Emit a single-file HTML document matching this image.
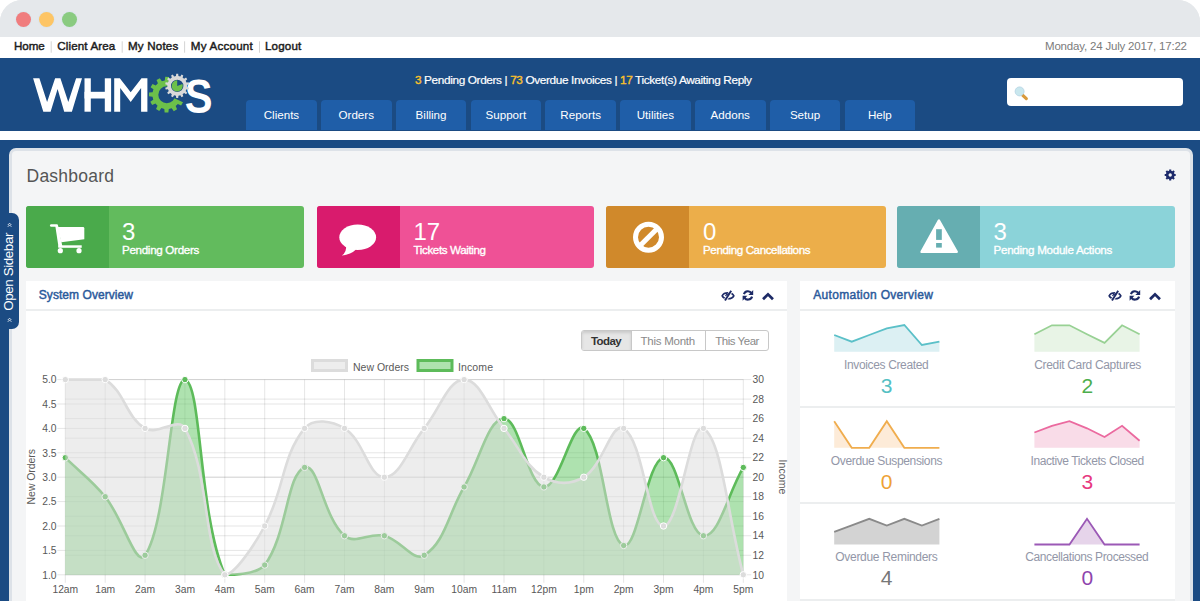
<!DOCTYPE html>
<html><head><meta charset="utf-8">
<style>
*{margin:0;padding:0;box-sizing:border-box}
html,body{width:1200px;height:601px;overflow:hidden;background:#fff;font-family:"Liberation Sans",sans-serif}
.abs{position:absolute;white-space:nowrap}
#win{position:absolute;left:0;top:0;width:1200px;height:601px;border-radius:22px 22px 0 0;overflow:hidden;background:#e5e8eb}
#bluebg{left:0;top:58px;width:1200px;height:543px;background:#1b4b83}
#chrome{left:0;top:0;width:1200px;height:37px;background:#e5e8eb}
.dot{width:15px;height:15px;border-radius:50%;top:12px}
#topnav{left:0;top:37px;width:1200px;height:21px;background:#fff}
#links{left:13.5px;top:40px;font-size:12px;font-weight:bold;color:#1a1a1a;letter-spacing:-0.2px}
#links .sep{color:#ccc;font-weight:normal;padding:0 2px}
#date{left:1045px;top:40px;font-size:12px;color:#7a7a7a;letter-spacing:-0.42px}
#header{left:0;top:58px;width:1200px;height:72.5px;background:#1b4b83}
#strip{left:0;top:130.5px;width:1200px;height:9.5px;background:#fff}
.tab{top:100.3px;height:30.2px;width:70.5px;background:#1f5ea8;border-radius:4px 4px 0 0;color:#fff;font-size:11.5px;text-align:center;line-height:30px;letter-spacing:-0.3px}
#alerts{left:415px;top:74px;font-size:11.5px;color:#fff;letter-spacing:-0.25px}
#alerts b{color:#f5b83d;font-weight:bold}
#search{left:1007.4px;top:77.9px;width:175.8px;height:27.9px;background:#fff;border-radius:4px}
#panel{left:9px;top:148px;width:1183.5px;height:470px;background:#f4f5f6;border:3px solid #dde2e8;border-radius:7px}
#dash{left:26px;top:164.5px;font-size:17.5px;color:#4a4a4a;letter-spacing:0.2px}
.box{top:206px;height:62px;width:277.5px;border-radius:3px;overflow:hidden}
.box .ic{left:0;top:0;width:83px;height:62px}
.box .num{left:96px;top:15px;font-size:24px;color:#fff}
.box .lbl{left:96px;top:38px;font-size:11px;color:#fff;font-weight:bold;letter-spacing:-0.45px}
.widget{background:#fff;top:281px;height:330px}
.whead{left:0;top:0;width:100%;height:29.5px;border-bottom:2px solid #eceeef}
.wtitle{top:7px;font-size:12px;font-weight:bold;color:#2b5b9c}
.slbl{font-size:12px;color:#8c8c9a;text-align:center;width:200px;letter-spacing:-0.35px}
.snum{font-size:20px;text-align:center;width:200px}
.sep2{left:800px;width:374.5px;height:2px;background:#eceeef}
#btns{left:581px;top:329.5px;width:187.6px;height:21.5px;border:1px solid #c8c8c8;border-radius:3px;overflow:hidden;background:#fff}
.btn{top:0;height:19.5px;line-height:19px;font-size:11.5px;color:#888;text-align:center}
</style></head><body>
<div id="win">
<div id="chrome" class="abs"></div><div id="bluebg" class="abs"></div>
<div class="abs dot" style="left:15.5px;top:12px;background:#f07d7e;box-shadow:0 0 0 1px #dde6ec"></div>
<div class="abs dot" style="left:38.5px;top:12px;background:#fdc565;box-shadow:0 0 0 1px #dde6ec"></div>
<div class="abs dot" style="left:61.5px;top:12px;background:#8acb80;box-shadow:0 0 0 1px #dde6ec"></div>
<div id="topnav" class="abs"></div>
<div id="header" class="abs"></div>
<svg class="abs" style="left:0;top:0" width="240" height="130">
 <g fill="#fff">
  <polygon points="33.1,78.3 39.4,78.3 47.1,101.9 55.1,78.3 60.4,78.3 68.3,101.9 76.1,78.3 82,78.3 71.9,111.7 64.2,111.7 57.6,89 50.6,111.7 43.3,111.7"/>
  <rect x="84.5" y="78.3" width="6.3" height="33.4"/><rect x="104.8" y="78.3" width="6.3" height="33.4"/><rect x="84.5" y="91.8" width="26" height="6.7"/>
  <polygon points="114.2,78.3 119.8,78.3 130.7,92.2 141.5,78.3 147.4,78.3 147.4,111.7 141.1,111.7 141.1,88 130.7,102 120.2,88 120.2,111.7 114.2,111.7"/>
 </g>
 <text transform="translate(184.8,112.6) scale(0.86,1)" font-size="48.5" font-weight="bold" fill="#fff" font-family="Liberation Sans">S</text>
 <defs><clipPath id="cgap"><path d="M166.80 94.70 L203.05 111.60 L199.35 117.95 L194.54 123.51 L188.80 128.10 L182.32 131.57 L175.32 133.78 L168.02 134.68 L160.69 134.23 L153.56 132.44 L146.88 129.38 L140.87 125.15 L135.73 119.90 L131.65 113.79 L128.75 107.03 L127.13 99.86 L126.86 92.52 L127.93 85.25 L130.32 78.30 L133.93 71.90 L138.66 66.27 L144.34 61.60 L150.77 58.05 L157.75 55.74 L165.03 54.74 L172.37 55.09 Z"/></clipPath></defs>
<path clip-path="url(#cgap)" fill-rule="evenodd" fill="#6cc04a" d="M164.80 80.44 L165.24 76.87 L168.98 76.93 L169.30 80.52 L172.19 81.35 L174.36 78.48 L177.57 80.40 L176.06 83.67 L178.15 85.83 L181.46 84.43 L183.28 87.71 L180.33 89.77 L181.06 92.70 L184.63 93.14 L184.57 96.88 L180.98 97.20 L180.15 100.09 L183.02 102.26 L181.10 105.47 L177.83 103.96 L175.67 106.05 L177.07 109.36 L173.79 111.18 L171.73 108.23 L168.80 108.96 L168.36 112.53 L164.62 112.47 L164.30 108.88 L161.41 108.05 L159.24 110.92 L156.03 109.00 L157.54 105.73 L155.45 103.57 L152.14 104.97 L150.32 101.69 L153.27 99.63 L152.54 96.70 L148.97 96.26 L149.03 92.52 L152.62 92.20 L153.45 89.31 L150.58 87.14 L152.50 83.93 L155.77 85.44 L157.93 83.35 L156.53 80.04 L159.81 78.22 L161.87 81.17 Z M158.30 94.70 A8.50 8.50 0 1 0 175.30 94.70 A8.50 8.50 0 1 0 158.30 94.70 Z"/>
<path fill-rule="evenodd" fill="#d9d9d9" d="M175.96 76.08 L176.22 73.84 L178.18 73.84 L178.44 76.08 L180.34 76.51 L181.55 74.61 L183.31 75.46 L182.58 77.59 L184.11 78.81 L186.02 77.62 L187.24 79.14 L185.65 80.75 L186.50 82.50 L188.74 82.26 L189.18 84.17 L187.05 84.92 L187.05 86.88 L189.18 87.63 L188.74 89.54 L186.50 89.30 L185.65 91.05 L187.24 92.66 L186.02 94.18 L184.11 92.99 L182.58 94.21 L183.31 96.34 L181.55 97.19 L180.34 95.29 L178.44 95.72 L178.18 97.96 L176.22 97.96 L175.96 95.72 L174.06 95.29 L172.85 97.19 L171.09 96.34 L171.82 94.21 L170.29 92.99 L168.38 94.18 L167.16 92.66 L168.75 91.05 L167.90 89.30 L165.66 89.54 L165.22 87.63 L167.35 86.88 L167.35 84.92 L165.22 84.17 L165.66 82.26 L167.90 82.50 L168.75 80.75 L167.16 79.14 L168.38 77.62 L170.29 78.81 L171.82 77.59 L171.09 75.46 L172.85 74.61 L174.06 76.51 Z M171.00 85.90 A6.20 6.20 0 1 0 183.40 85.90 A6.20 6.20 0 1 0 171.00 85.90 Z"/>
<path fill="#6cc04a" d="M177.20 85.90 L182.46 83.98 A5.6 5.6 0 1 1 177.20 80.30 Z"/>
</svg>
<div id="search" class="abs"></div>
<svg class="abs" style="left:1005px;top:76px" width="30" height="30"><line x1="17.8" y1="19.3" x2="21.3" y2="22.6" stroke="#d99a3c" stroke-width="3.2" stroke-linecap="round"/><circle cx="14.6" cy="15.4" r="4.5" fill="#c9e7ee" stroke="#b4d3e3" stroke-width="0.8"/></svg>
<div class="abs tab" style="left:246.2px"></div>
<div class="abs tab" style="left:321px"></div>
<div class="abs tab" style="left:395.8px"></div>
<div class="abs tab" style="left:470.6px"></div>
<div class="abs tab" style="left:545.4px"></div>
<div class="abs tab" style="left:620.2px"></div>
<div class="abs tab" style="left:695px"></div>
<div class="abs tab" style="left:769.8px"></div>
<div class="abs tab" style="left:844.6px"></div>
<div id="strip" class="abs"></div>
<div id="panel" class="abs"></div>
<svg class="abs" style="left:1162px;top:166.5px" width="16" height="16"><path fill-rule="evenodd" fill="#1d2a6b" d="M7.17 3.72 L7.15 2.50 L9.25 2.50 L9.23 3.72 L10.50 4.25 L11.35 3.37 L12.83 4.85 L11.95 5.70 L12.48 6.97 L13.70 6.95 L13.70 9.05 L12.48 9.03 L11.95 10.30 L12.83 11.15 L11.35 12.63 L10.50 11.75 L9.23 12.28 L9.25 13.50 L7.15 13.50 L7.17 12.28 L5.90 11.75 L5.05 12.63 L3.57 11.15 L4.45 10.30 L3.92 9.03 L2.70 9.05 L2.70 6.95 L3.92 6.97 L4.45 5.70 L3.57 4.85 L5.05 3.37 L5.90 4.25 Z M6.50 8.00 A1.70 1.70 0 1 0 9.90 8.00 A1.70 1.70 0 1 0 6.50 8.00 Z"/></svg>

<div class="abs box" style="left:26px;background:#62bb5d"><div class="abs ic" style="background:#4aaa4b"></div></div>
<div class="abs box" style="left:316.8px;background:#ef5196"><div class="abs ic" style="background:#d91b6d"></div></div>
<div class="abs box" style="left:606.4px;width:279.2px;background:#ecae4a"><div class="abs ic" style="background:#d0892b"></div></div>
<div class="abs box" style="left:897.2px;width:278px;background:#8bd3d9"><div class="abs ic" style="background:#66aeb1"></div></div>
<svg class="abs" style="left:0;top:200px" width="1200" height="70">
 <g fill="#fff">
  <rect x="50" y="24.3" width="8" height="2.5" rx="1.2"/>
  <polygon points="55.3,26 58.2,26 62.3,46 58.5,47"/>
  <path d="M57.5 27 L83 27 Q84.3 27 84.3 28.3 L84.3 39.3 L61.3 42.2 Z"/>
  <rect x="58.3" y="45.3" width="23.4" height="2.5"/>
  <circle cx="60.3" cy="50.7" r="2.6"/><circle cx="79" cy="50.7" r="2.6"/>
  <ellipse cx="357.7" cy="37.3" rx="18.4" ry="12.8"/>
  <path d="M346 45 Q347 52 341.8 55.5 Q351 54.5 356 49.5 Z"/>
 </g>
 <g fill="none" stroke="#fff" stroke-width="5"><circle cx="648.5" cy="37.2" r="13"/><line x1="657.8" y1="27.9" x2="639.2" y2="46.5"/></g>
 <path fill="#fff" stroke="#fff" stroke-width="2.5" stroke-linejoin="round" d="M938.9 20.5 L921.6 51.8 L956.7 51.8 Z"/><rect x="936.1" y="29.2" width="5.7" height="10.7" fill="#66aeb1"/><rect x="936.1" y="43" width="5.7" height="4.6" fill="#66aeb1"/>
</svg>

<div class="abs widget" style="left:26px;width:761px"><div class="abs whead"></div></div>
<div class="abs widget" style="left:800px;width:374.5px"><div class="abs whead"></div></div>
<svg class="abs" style="left:715.0px;top:285px" width="60" height="22"><g transform="translate(-715,-285)"><path d="M722.2 295.8 C724 292 732 292 733.8 295.8 C732 299.6 724 299.6 722.2 295.8 Z" fill="none" stroke="#1d2a66" stroke-width="1.7"/><line x1="731.2" y1="290.8" x2="725" y2="300.6" stroke="#fff" stroke-width="3.4"/><line x1="731.2" y1="290.8" x2="725" y2="300.6" stroke="#1d2a66" stroke-width="1.9"/><path d="M725.5 296 Q727 293.5 729 294" fill="none" stroke="#1d2a66" stroke-width="1.2"/><path d="M743.9 294.2 A4.3 4.3 0 0 1 751.6 293.3" fill="none" stroke="#1d2a66" stroke-width="2.1"/><path d="M752.1 296.7 A4.3 4.3 0 0 1 744.4 297.6" fill="none" stroke="#1d2a66" stroke-width="2.1"/><path d="M753.2 290.1 L753.2 295 L748.4 295 Z" fill="#1d2a66"/><path d="M742.6 300.7 L742.6 295.8 L747.4 295.8 Z" fill="#1d2a66"/><polyline points="764,298.3 768,294.3 772,298.3" fill="none" stroke="#1d2a66" stroke-width="2.7" stroke-linecap="square"/></g></svg><svg class="abs" style="left:1102.2px;top:285px" width="60" height="22"><g transform="translate(-715,-285)"><path d="M722.2 295.8 C724 292 732 292 733.8 295.8 C732 299.6 724 299.6 722.2 295.8 Z" fill="none" stroke="#1d2a66" stroke-width="1.7"/><line x1="731.2" y1="290.8" x2="725" y2="300.6" stroke="#fff" stroke-width="3.4"/><line x1="731.2" y1="290.8" x2="725" y2="300.6" stroke="#1d2a66" stroke-width="1.9"/><path d="M725.5 296 Q727 293.5 729 294" fill="none" stroke="#1d2a66" stroke-width="1.2"/><path d="M743.9 294.2 A4.3 4.3 0 0 1 751.6 293.3" fill="none" stroke="#1d2a66" stroke-width="2.1"/><path d="M752.1 296.7 A4.3 4.3 0 0 1 744.4 297.6" fill="none" stroke="#1d2a66" stroke-width="2.1"/><path d="M753.2 290.1 L753.2 295 L748.4 295 Z" fill="#1d2a66"/><path d="M742.6 300.7 L742.6 295.8 L747.4 295.8 Z" fill="#1d2a66"/><polyline points="764,298.3 768,294.3 772,298.3" fill="none" stroke="#1d2a66" stroke-width="2.7" stroke-linecap="square"/></g></svg>

<div id="btns" class="abs">
 <div class="abs btn" style="left:0;width:50px;background:#e6e6e6;color:#333;font-weight:bold;box-shadow:inset 0 2px 3px rgba(0,0,0,.12);border-right:1px solid #c8c8c8"></div>
 <div class="abs btn" style="left:50px;width:74px;border-right:1px solid #c8c8c8"></div>
 <div class="abs btn" style="left:124px;width:63px"></div>
</div>

<svg class="abs" style="left:0;top:0" width="1200" height="601">
<rect x="312.5" y="360.5" width="34" height="10" fill="rgba(220,220,220,0.5)" stroke="rgba(220,220,220,1)" stroke-width="3"/>
<rect x="418" y="360.5" width="34" height="10" fill="rgba(93,197,96,0.5)" stroke="rgba(93,187,90,1)" stroke-width="3"/>

<g stroke="rgba(0,0,0,0.1)" stroke-width="1"><line x1="57.3" y1="379.60" x2="743.3" y2="379.60"/><line x1="57.3" y1="404.00" x2="743.3" y2="404.00"/><line x1="57.3" y1="428.40" x2="743.3" y2="428.40"/><line x1="57.3" y1="452.80" x2="743.3" y2="452.80"/><line x1="57.3" y1="477.20" x2="743.3" y2="477.20"/><line x1="57.3" y1="501.60" x2="743.3" y2="501.60"/><line x1="57.3" y1="526.00" x2="743.3" y2="526.00"/><line x1="57.3" y1="550.40" x2="743.3" y2="550.40"/><line x1="57.3" y1="574.80" x2="743.3" y2="574.80"/><line x1="65.3" y1="379.60" x2="751.3" y2="379.60"/><line x1="65.3" y1="399.12" x2="751.3" y2="399.12"/><line x1="65.3" y1="418.64" x2="751.3" y2="418.64"/><line x1="65.3" y1="438.16" x2="751.3" y2="438.16"/><line x1="65.3" y1="457.68" x2="751.3" y2="457.68"/><line x1="65.3" y1="477.20" x2="751.3" y2="477.20"/><line x1="65.3" y1="496.72" x2="751.3" y2="496.72"/><line x1="65.3" y1="516.24" x2="751.3" y2="516.24"/><line x1="65.3" y1="535.76" x2="751.3" y2="535.76"/><line x1="65.3" y1="555.28" x2="751.3" y2="555.28"/><line x1="65.3" y1="574.80" x2="751.3" y2="574.80"/><line x1="65.30" y1="379.6" x2="65.30" y2="582.8"/><line x1="105.18" y1="379.6" x2="105.18" y2="582.8"/><line x1="145.06" y1="379.6" x2="145.06" y2="582.8"/><line x1="184.95" y1="379.6" x2="184.95" y2="582.8"/><line x1="224.83" y1="379.6" x2="224.83" y2="582.8"/><line x1="264.71" y1="379.6" x2="264.71" y2="582.8"/><line x1="304.59" y1="379.6" x2="304.59" y2="582.8"/><line x1="344.48" y1="379.6" x2="344.48" y2="582.8"/><line x1="384.36" y1="379.6" x2="384.36" y2="582.8"/><line x1="424.24" y1="379.6" x2="424.24" y2="582.8"/><line x1="464.12" y1="379.6" x2="464.12" y2="582.8"/><line x1="504.01" y1="379.6" x2="504.01" y2="582.8"/><line x1="543.89" y1="379.6" x2="543.89" y2="582.8"/><line x1="583.77" y1="379.6" x2="583.77" y2="582.8"/><line x1="623.65" y1="379.6" x2="623.65" y2="582.8"/><line x1="663.54" y1="379.6" x2="663.54" y2="582.8"/><line x1="703.42" y1="379.6" x2="703.42" y2="582.8"/><line x1="743.30" y1="379.6" x2="743.30" y2="582.8"/></g>
<path d="M65.30 457.68 C81.25 473.30 91.12 479.52 105.18 496.72 C123.03 518.56 136.06 568.50 145.06 555.28 C167.96 521.66 169.80 379.60 184.95 379.60 C201.70 383.70 198.38 513.30 224.83 574.80 C230.28 574.80 255.77 574.80 264.71 565.04 C287.68 534.13 286.37 474.13 304.59 467.44 C318.27 462.42 323.26 517.59 344.48 535.76 C355.17 544.92 369.26 532.07 384.36 535.76 C401.17 539.87 412.77 562.30 424.24 555.28 C444.68 542.78 448.17 514.29 464.12 486.96 C480.08 459.63 488.05 418.64 504.01 418.64 C519.96 418.64 527.06 484.90 543.89 486.96 C558.96 488.80 572.15 419.87 583.77 428.40 C604.06 443.29 605.73 538.94 623.65 545.52 C637.63 550.65 646.82 459.73 663.54 457.68 C678.73 455.82 686.65 533.71 703.42 535.76 C718.55 537.61 727.35 494.77 743.30 467.44 L743.30 574.80 L65.30 574.80 Z" fill="rgba(93,197,96,0.5)" stroke="none"/><path d="M65.30 457.68 C81.25 473.30 91.12 479.52 105.18 496.72 C123.03 518.56 136.06 568.50 145.06 555.28 C167.96 521.66 169.80 379.60 184.95 379.60 C201.70 383.70 198.38 513.30 224.83 574.80 C230.28 574.80 255.77 574.80 264.71 565.04 C287.68 534.13 286.37 474.13 304.59 467.44 C318.27 462.42 323.26 517.59 344.48 535.76 C355.17 544.92 369.26 532.07 384.36 535.76 C401.17 539.87 412.77 562.30 424.24 555.28 C444.68 542.78 448.17 514.29 464.12 486.96 C480.08 459.63 488.05 418.64 504.01 418.64 C519.96 418.64 527.06 484.90 543.89 486.96 C558.96 488.80 572.15 419.87 583.77 428.40 C604.06 443.29 605.73 538.94 623.65 545.52 C637.63 550.65 646.82 459.73 663.54 457.68 C678.73 455.82 686.65 533.71 703.42 535.76 C718.55 537.61 727.35 494.77 743.30 467.44" fill="none" stroke="rgba(93,187,90,1)" stroke-width="2.6"/><circle cx="65.30" cy="457.68" r="3.2" fill="rgba(93,187,90,1)" stroke="#fff" stroke-width="1"/><circle cx="105.18" cy="496.72" r="3.2" fill="rgba(93,187,90,1)" stroke="#fff" stroke-width="1"/><circle cx="145.06" cy="555.28" r="3.2" fill="rgba(93,187,90,1)" stroke="#fff" stroke-width="1"/><circle cx="184.95" cy="379.60" r="3.2" fill="rgba(93,187,90,1)" stroke="#fff" stroke-width="1"/><circle cx="224.83" cy="574.80" r="3.2" fill="rgba(93,187,90,1)" stroke="#fff" stroke-width="1"/><circle cx="264.71" cy="565.04" r="3.2" fill="rgba(93,187,90,1)" stroke="#fff" stroke-width="1"/><circle cx="304.59" cy="467.44" r="3.2" fill="rgba(93,187,90,1)" stroke="#fff" stroke-width="1"/><circle cx="344.48" cy="535.76" r="3.2" fill="rgba(93,187,90,1)" stroke="#fff" stroke-width="1"/><circle cx="384.36" cy="535.76" r="3.2" fill="rgba(93,187,90,1)" stroke="#fff" stroke-width="1"/><circle cx="424.24" cy="555.28" r="3.2" fill="rgba(93,187,90,1)" stroke="#fff" stroke-width="1"/><circle cx="464.12" cy="486.96" r="3.2" fill="rgba(93,187,90,1)" stroke="#fff" stroke-width="1"/><circle cx="504.01" cy="418.64" r="3.2" fill="rgba(93,187,90,1)" stroke="#fff" stroke-width="1"/><circle cx="543.89" cy="486.96" r="3.2" fill="rgba(93,187,90,1)" stroke="#fff" stroke-width="1"/><circle cx="583.77" cy="428.40" r="3.2" fill="rgba(93,187,90,1)" stroke="#fff" stroke-width="1"/><circle cx="623.65" cy="545.52" r="3.2" fill="rgba(93,187,90,1)" stroke="#fff" stroke-width="1"/><circle cx="663.54" cy="457.68" r="3.2" fill="rgba(93,187,90,1)" stroke="#fff" stroke-width="1"/><circle cx="703.42" cy="535.76" r="3.2" fill="rgba(93,187,90,1)" stroke="#fff" stroke-width="1"/><circle cx="743.30" cy="467.44" r="3.2" fill="rgba(93,187,90,1)" stroke="#fff" stroke-width="1"/>
<path d="M65.30 379.60 C81.25 379.60 92.82 379.60 105.18 379.60 C124.72 391.55 125.52 416.45 145.06 428.40 C157.43 435.97 178.31 416.21 184.95 428.40 C210.21 474.77 202.29 547.22 224.83 574.80 C234.19 574.80 252.78 547.91 264.71 526.00 C284.68 489.35 281.44 456.73 304.59 428.40 C313.35 417.69 332.11 420.83 344.48 428.40 C364.02 440.35 368.41 477.20 384.36 477.20 C400.31 477.20 408.29 447.92 424.24 428.40 C440.19 408.88 448.17 379.60 464.12 379.60 C480.08 379.60 488.05 408.88 504.01 428.40 C519.96 447.92 524.35 465.25 543.89 477.20 C556.25 484.77 571.41 484.77 583.77 477.20 C603.31 465.25 611.72 421.10 623.65 428.40 C643.62 440.62 647.58 526.00 663.54 526.00 C679.49 526.00 690.34 420.40 703.42 428.40 C722.24 439.92 727.35 516.24 743.30 574.80 L743.30 574.80 L65.30 574.80 Z" fill="rgba(220,220,220,0.5)" stroke="none"/><path d="M65.30 379.60 C81.25 379.60 92.82 379.60 105.18 379.60 C124.72 391.55 125.52 416.45 145.06 428.40 C157.43 435.97 178.31 416.21 184.95 428.40 C210.21 474.77 202.29 547.22 224.83 574.80 C234.19 574.80 252.78 547.91 264.71 526.00 C284.68 489.35 281.44 456.73 304.59 428.40 C313.35 417.69 332.11 420.83 344.48 428.40 C364.02 440.35 368.41 477.20 384.36 477.20 C400.31 477.20 408.29 447.92 424.24 428.40 C440.19 408.88 448.17 379.60 464.12 379.60 C480.08 379.60 488.05 408.88 504.01 428.40 C519.96 447.92 524.35 465.25 543.89 477.20 C556.25 484.77 571.41 484.77 583.77 477.20 C603.31 465.25 611.72 421.10 623.65 428.40 C643.62 440.62 647.58 526.00 663.54 526.00 C679.49 526.00 690.34 420.40 703.42 428.40 C722.24 439.92 727.35 516.24 743.30 574.80" fill="none" stroke="rgba(220,220,220,1)" stroke-width="2.6"/><circle cx="65.30" cy="379.60" r="3.2" fill="rgba(220,220,220,1)" stroke="#fff" stroke-width="1"/><circle cx="105.18" cy="379.60" r="3.2" fill="rgba(220,220,220,1)" stroke="#fff" stroke-width="1"/><circle cx="145.06" cy="428.40" r="3.2" fill="rgba(220,220,220,1)" stroke="#fff" stroke-width="1"/><circle cx="184.95" cy="428.40" r="3.2" fill="rgba(220,220,220,1)" stroke="#fff" stroke-width="1"/><circle cx="224.83" cy="574.80" r="3.2" fill="rgba(220,220,220,1)" stroke="#fff" stroke-width="1"/><circle cx="264.71" cy="526.00" r="3.2" fill="rgba(220,220,220,1)" stroke="#fff" stroke-width="1"/><circle cx="304.59" cy="428.40" r="3.2" fill="rgba(220,220,220,1)" stroke="#fff" stroke-width="1"/><circle cx="344.48" cy="428.40" r="3.2" fill="rgba(220,220,220,1)" stroke="#fff" stroke-width="1"/><circle cx="384.36" cy="477.20" r="3.2" fill="rgba(220,220,220,1)" stroke="#fff" stroke-width="1"/><circle cx="424.24" cy="428.40" r="3.2" fill="rgba(220,220,220,1)" stroke="#fff" stroke-width="1"/><circle cx="464.12" cy="379.60" r="3.2" fill="rgba(220,220,220,1)" stroke="#fff" stroke-width="1"/><circle cx="504.01" cy="428.40" r="3.2" fill="rgba(220,220,220,1)" stroke="#fff" stroke-width="1"/><circle cx="543.89" cy="477.20" r="3.2" fill="rgba(220,220,220,1)" stroke="#fff" stroke-width="1"/><circle cx="583.77" cy="477.20" r="3.2" fill="rgba(220,220,220,1)" stroke="#fff" stroke-width="1"/><circle cx="623.65" cy="428.40" r="3.2" fill="rgba(220,220,220,1)" stroke="#fff" stroke-width="1"/><circle cx="663.54" cy="526.00" r="3.2" fill="rgba(220,220,220,1)" stroke="#fff" stroke-width="1"/><circle cx="703.42" cy="428.40" r="3.2" fill="rgba(220,220,220,1)" stroke="#fff" stroke-width="1"/><circle cx="743.30" cy="574.80" r="3.2" fill="rgba(220,220,220,1)" stroke="#fff" stroke-width="1"/>
<g font-family="Liberation Sans" font-size="10.3" fill="#585858"><text x="65.30" y="593" text-anchor="middle">12am</text><text x="105.18" y="593" text-anchor="middle">1am</text><text x="145.06" y="593" text-anchor="middle">2am</text><text x="184.95" y="593" text-anchor="middle">3am</text><text x="224.83" y="593" text-anchor="middle">4am</text><text x="264.71" y="593" text-anchor="middle">5am</text><text x="304.59" y="593" text-anchor="middle">6am</text><text x="344.48" y="593" text-anchor="middle">7am</text><text x="384.36" y="593" text-anchor="middle">8am</text><text x="424.24" y="593" text-anchor="middle">9am</text><text x="464.12" y="593" text-anchor="middle">10am</text><text x="504.01" y="593" text-anchor="middle">11am</text><text x="543.89" y="593" text-anchor="middle">12pm</text><text x="583.77" y="593" text-anchor="middle">1pm</text><text x="623.65" y="593" text-anchor="middle">2pm</text><text x="663.54" y="593" text-anchor="middle">3pm</text><text x="703.42" y="593" text-anchor="middle">4pm</text><text x="743.30" y="593" text-anchor="middle">5pm</text><text x="56.5" y="383.30" text-anchor="end">5.0</text><text x="56.5" y="407.70" text-anchor="end">4.5</text><text x="56.5" y="432.10" text-anchor="end">4.0</text><text x="56.5" y="456.50" text-anchor="end">3.5</text><text x="56.5" y="480.90" text-anchor="end">3.0</text><text x="56.5" y="505.30" text-anchor="end">2.5</text><text x="56.5" y="529.70" text-anchor="end">2.0</text><text x="56.5" y="554.10" text-anchor="end">1.5</text><text x="56.5" y="578.50" text-anchor="end">1.0</text><text x="752.5" y="383.30">30</text><text x="752.5" y="402.82">28</text><text x="752.5" y="422.34">26</text><text x="752.5" y="441.86">24</text><text x="752.5" y="461.38">22</text><text x="752.5" y="480.90">20</text><text x="752.5" y="500.42">18</text><text x="752.5" y="519.94">16</text><text x="752.5" y="539.46">14</text><text x="752.5" y="558.98">12</text><text x="752.5" y="578.50">10</text></g>
<polygon points="834.20,335.00 851.73,341.70 869.27,335.00 886.80,328.30 904.33,325.00 921.87,345.00 939.40,341.70 939.40,351.70 834.20,351.70" fill="#dcf0f3"/>
<polyline points="834.20,335.00 851.73,341.70 869.27,335.00 886.80,328.30 904.33,325.00 921.87,345.00 939.40,341.70" fill="none" stroke="#5bc0c8" stroke-width="1.8" stroke-linejoin="miter"/>
<polygon points="1034.40,334.20 1051.93,325.30 1069.47,325.30 1087.00,334.20 1104.53,342.80 1122.07,325.30 1139.60,334.20 1139.60,351.70 1034.40,351.70" fill="#e8f4e6"/>
<polyline points="1034.40,334.20 1051.93,325.30 1069.47,325.30 1087.00,334.20 1104.53,342.80 1122.07,325.30 1139.60,334.20" fill="none" stroke="#98d194" stroke-width="1.8" stroke-linejoin="miter"/>
<polygon points="834.20,421.20 851.73,447.80 869.27,447.80 886.80,421.20 904.33,447.80 921.87,447.80 939.40,447.80 939.40,447.80 834.20,447.80" fill="#fdebd8"/>
<polyline points="834.20,421.20 851.73,447.80 869.27,447.80 886.80,421.20 904.33,447.80 921.87,447.80 939.40,447.80" fill="none" stroke="#f0ad4e" stroke-width="1.8" stroke-linejoin="miter"/>
<polygon points="1034.40,432.50 1051.93,425.80 1069.47,421.10 1087.00,428.30 1104.53,437.00 1122.07,425.80 1139.60,440.80 1139.60,447.80 1034.40,447.80" fill="#f9dce8"/>
<polyline points="1034.40,432.50 1051.93,425.80 1069.47,421.10 1087.00,428.30 1104.53,437.00 1122.07,425.80 1139.60,440.80" fill="none" stroke="#eb6a9f" stroke-width="1.8" stroke-linejoin="miter"/>
<polygon points="834.20,531.90 851.73,525.40 869.27,518.80 886.80,525.50 904.33,518.80 921.87,525.50 939.40,518.80 939.40,544.50 834.20,544.50" fill="#d3d3d3"/>
<polyline points="834.20,531.90 851.73,525.40 869.27,518.80 886.80,525.50 904.33,518.80 921.87,525.50 939.40,518.80" fill="none" stroke="#8a8a8a" stroke-width="1.8" stroke-linejoin="miter"/>
<polygon points="1034.40,544.50 1051.93,544.50 1069.47,544.50 1087.00,518.80 1104.53,544.50 1122.07,544.50 1139.60,544.50 1139.60,544.50 1034.40,544.50" fill="#e6d4ea"/>
<polyline points="1034.40,544.50 1051.93,544.50 1069.47,544.50 1087.00,518.80 1104.53,544.50 1122.07,544.50 1139.60,544.50" fill="none" stroke="#9b59b6" stroke-width="1.8" stroke-linejoin="miter"/>
</svg>
<div class="abs sep2" style="top:406px"></div><div class="abs sep2" style="top:502px"></div><div class="abs sep2" style="top:599px"></div><div class="abs" style="left:0;top:212.8px;width:18.8px;height:116.6px;background:#1b4b83;border-radius:0 7px 7px 0"></div>
<div class="abs" style="left:15.3px;top:271px;transform:translate(-50%,-50%) rotate(-90deg);transform-origin:0 0;font-size:12px;color:#fff"></div>

<svg class="abs" style="left:0;top:0" width="1200" height="601" font-family="Liberation Sans"><text x="13.90" y="49.70" font-size="11.60" font-weight="normal" fill="#1c1c1c" textLength="30.8" lengthAdjust="spacing" stroke="#1c1c1c" stroke-width="0.45">Home</text>
<text x="57.30" y="49.70" font-size="11.60" font-weight="normal" fill="#1c1c1c" textLength="58.0" lengthAdjust="spacing" stroke="#1c1c1c" stroke-width="0.45">Client Area</text>
<text x="127.90" y="49.70" font-size="11.60" font-weight="normal" fill="#1c1c1c" textLength="50.4" lengthAdjust="spacing" stroke="#1c1c1c" stroke-width="0.45">My Notes</text>
<text x="190.80" y="49.70" font-size="11.60" font-weight="normal" fill="#1c1c1c" textLength="61.9" lengthAdjust="spacing" stroke="#1c1c1c" stroke-width="0.45">My Account</text>
<text x="264.90" y="49.70" font-size="11.60" font-weight="normal" fill="#1c1c1c" textLength="36.4" lengthAdjust="spacing" stroke="#1c1c1c" stroke-width="0.45">Logout</text>
<rect x="50.7" y="41.3" width="1" height="11.4" fill="#d4d4d4"/>
<rect x="121.7" y="41.3" width="1" height="11.4" fill="#d4d4d4"/>
<rect x="184.1" y="41.3" width="1" height="11.4" fill="#d4d4d4"/>
<rect x="259.0" y="41.3" width="1" height="11.4" fill="#d4d4d4"/>
<text x="1045.00" y="50.00" font-size="11.50" font-weight="normal" fill="#7b7b7b" textLength="142.0" lengthAdjust="spacing">Monday, 24 July 2017, 17:22</text>
<text x="415" y="84.4" font-size="11.8" fill="#fff" stroke="#fff" stroke-width="0.2" textLength="337" lengthAdjust="spacing"><tspan fill="#f8c02c" stroke="#f8c02c" stroke-width="0.4">3</tspan> Pending Orders | <tspan fill="#f8c02c" stroke="#f8c02c" stroke-width="0.4">73</tspan> Overdue Invoices | <tspan fill="#f8c02c" stroke="#f8c02c" stroke-width="0.4">17</tspan> Ticket(s) Awaiting Reply</text>
<text x="281.45" y="119.20" font-size="11.60" font-weight="normal" fill="#fff" text-anchor="middle">Clients</text>
<text x="356.25" y="119.20" font-size="11.60" font-weight="normal" fill="#fff" text-anchor="middle">Orders</text>
<text x="431.05" y="119.20" font-size="11.60" font-weight="normal" fill="#fff" text-anchor="middle">Billing</text>
<text x="505.85" y="119.20" font-size="11.60" font-weight="normal" fill="#fff" text-anchor="middle">Support</text>
<text x="580.65" y="119.20" font-size="11.60" font-weight="normal" fill="#fff" text-anchor="middle">Reports</text>
<text x="655.45" y="119.20" font-size="11.60" font-weight="normal" fill="#fff" text-anchor="middle">Utilities</text>
<text x="730.25" y="119.20" font-size="11.60" font-weight="normal" fill="#fff" text-anchor="middle">Addons</text>
<text x="805.05" y="119.20" font-size="11.60" font-weight="normal" fill="#fff" text-anchor="middle">Setup</text>
<text x="879.85" y="119.20" font-size="11.60" font-weight="normal" fill="#fff" text-anchor="middle">Help</text>
<text x="26.50" y="181.60" font-size="17.50" font-weight="normal" fill="#555" textLength="87.5" lengthAdjust="spacing">Dashboard</text>
<text x="122.00" y="240.00" font-size="24.00" font-weight="normal" fill="#fff">3</text>
<text x="122.00" y="254.00" font-size="11.60" font-weight="normal" fill="#fff" textLength="77.3" lengthAdjust="spacing" stroke="#fff" stroke-width="0.35">Pending Orders</text>
<text x="413.50" y="240.00" font-size="24.00" font-weight="normal" fill="#fff">17</text>
<text x="413.50" y="254.00" font-size="11.60" font-weight="normal" fill="#fff" textLength="72.5" lengthAdjust="spacing" stroke="#fff" stroke-width="0.35">Tickets Waiting</text>
<text x="703.00" y="240.00" font-size="24.00" font-weight="normal" fill="#fff">0</text>
<text x="703.00" y="254.00" font-size="11.60" font-weight="normal" fill="#fff" textLength="107.5" lengthAdjust="spacing" stroke="#fff" stroke-width="0.35">Pending Cancellations</text>
<text x="993.50" y="240.00" font-size="24.00" font-weight="normal" fill="#fff">3</text>
<text x="993.50" y="254.00" font-size="11.60" font-weight="normal" fill="#fff" textLength="118.8" lengthAdjust="spacing" stroke="#fff" stroke-width="0.35">Pending Module Actions</text>
<text x="38.80" y="298.70" font-size="12.00" font-weight="normal" fill="#2b5a9b" textLength="94.2" lengthAdjust="spacing" stroke="#2b5a9b" stroke-width="0.45">System Overview</text>
<text x="813.30" y="298.70" font-size="12.00" font-weight="normal" fill="#2b5a9b" textLength="119.5" lengthAdjust="spacing" stroke="#2b5a9b" stroke-width="0.45">Automation Overview</text>
<text x="886.35" y="369.00" font-size="12.00" font-weight="normal" fill="#9397a8" text-anchor="middle" textLength="84.7" lengthAdjust="spacing">Invoices Created</text>
<text x="1087.75" y="369.00" font-size="12.00" font-weight="normal" fill="#9397a8" text-anchor="middle" textLength="107.0" lengthAdjust="spacing">Credit Card Captures</text>
<text x="886.65" y="465.30" font-size="12.00" font-weight="normal" fill="#9397a8" text-anchor="middle" textLength="111.7" lengthAdjust="spacing">Overdue Suspensions</text>
<text x="1087.35" y="465.30" font-size="12.00" font-weight="normal" fill="#9397a8" text-anchor="middle" textLength="113.7" lengthAdjust="spacing">Inactive Tickets Closed</text>
<text x="886.55" y="561.30" font-size="12.00" font-weight="normal" fill="#9397a8" text-anchor="middle" textLength="102.5" lengthAdjust="spacing">Overdue Reminders</text>
<text x="1086.95" y="561.30" font-size="12.00" font-weight="normal" fill="#9397a8" text-anchor="middle" textLength="123.5" lengthAdjust="spacing">Cancellations Processed</text>
<text x="886.50" y="392.50" font-size="21.00" font-weight="normal" fill="#55c0c3" text-anchor="middle">3</text>
<text x="1087.30" y="392.50" font-size="21.00" font-weight="normal" fill="#4cae4c" text-anchor="middle">2</text>
<text x="886.50" y="488.50" font-size="21.00" font-weight="normal" fill="#eea236" text-anchor="middle">0</text>
<text x="1087.30" y="488.50" font-size="21.00" font-weight="normal" fill="#e7397f" text-anchor="middle">3</text>
<text x="886.50" y="584.50" font-size="21.00" font-weight="normal" fill="#777" text-anchor="middle">4</text>
<text x="1087.30" y="584.50" font-size="21.00" font-weight="normal" fill="#8e44ad" text-anchor="middle">0</text>
<text x="591.00" y="344.60" font-size="11.50" font-weight="bold" fill="#333" textLength="30.6" lengthAdjust="spacing">Today</text>
<text x="640.60" y="344.60" font-size="11.50" font-weight="normal" fill="#8a8a8a" textLength="54.5" lengthAdjust="spacing">This Month</text>
<text x="715.20" y="344.60" font-size="11.50" font-weight="normal" fill="#8a8a8a" textLength="44.2" lengthAdjust="spacing">This Year</text>
<text x="353.00" y="370.90" font-size="10.50" font-weight="normal" fill="#5a5a5a" textLength="56.0" lengthAdjust="spacing">New Orders</text>
<text x="458.00" y="370.90" font-size="10.50" font-weight="normal" fill="#5a5a5a" textLength="35.0" lengthAdjust="spacing">Income</text>
<text transform="translate(34.9,504.4) rotate(-90)" font-size="10.5" fill="#5a5a5a" textLength="55.4" lengthAdjust="spacing">New Orders</text>
<text transform="translate(779.3,459.4) rotate(90)" font-size="10.5" fill="#5a5a5a" textLength="35" lengthAdjust="spacing">Income</text>
<text transform="translate(12.6,310.8) rotate(-90)" font-size="13.4" fill="#fff" textLength="78.2" lengthAdjust="spacing">Open Sidebar</text>
<path d="M7.8 225.0 L9.6 223.2 L11.4 225.0 M7.8 226.8 L9.6 225.0 L11.4 226.8" fill="none" stroke="#e8eef5" stroke-width="0.9"/>
<path d="M7.8 320.0 L9.6 318.2 L11.4 320.0 M7.8 321.8 L9.6 320.0 L11.4 321.8" fill="none" stroke="#e8eef5" stroke-width="0.9"/></svg>
</div>
</body></html>
